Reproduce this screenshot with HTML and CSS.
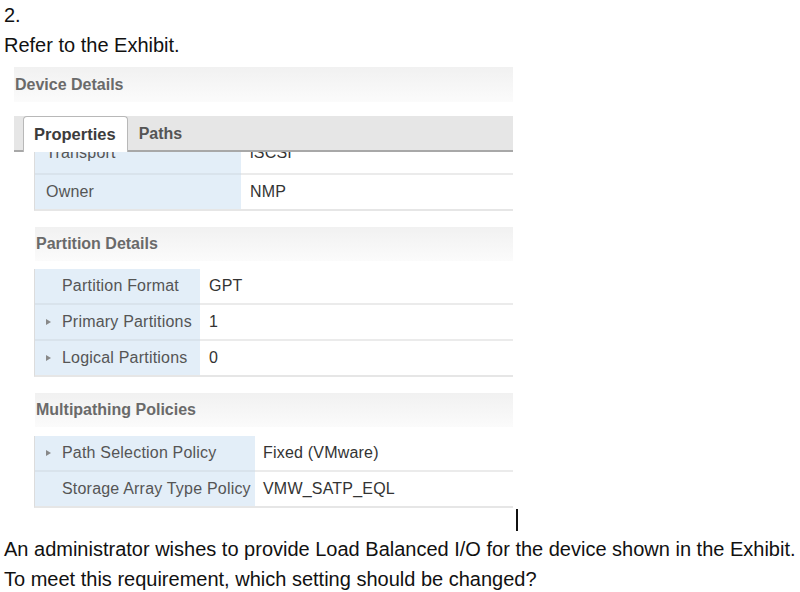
FILE: index.html
```html
<!DOCTYPE html>
<html>
<head>
<meta charset="utf-8">
<link rel="stylesheet" href="styles.css">
</head>
<body>
<p class="line">2.</p>
<p class="line">Refer to the Exhibit.</p>
<div class="exhibit">
  <div class="band band-top"><span>Device Details</span></div>
  <div class="tabbar">
    <div class="tab active">Properties</div>
    <div class="tab">Paths</div>
  </div>
  <div class="clip">
    <div class="grid g1 scrolled">
      <div class="lab first">Transport</div><div class="val first">iSCSI</div>
      <div class="lab last">Owner</div><div class="val last">NMP</div>
    </div>
  </div>
  <div class="band band-sec"><span>Partition Details</span></div>
  <div class="grid g2">
    <div class="lab ind">Partition Format</div><div class="val">GPT</div>
    <div class="lab"><i class="arr"></i>Primary Partitions</div><div class="val">1</div>
    <div class="lab last"><i class="arr"></i>Logical Partitions</div><div class="val last">0</div>
  </div>
  <div class="band band-sec band-mp"><span>Multipathing Policies</span></div>
  <div class="grid g3">
    <div class="lab"><i class="arr"></i>Path Selection Policy</div><div class="val">Fixed (VMware)</div>
    <div class="lab ind last">Storage Array Type Policy</div><div class="val last">VMW_SATP_EQL</div>
  </div>
</div>
<div class="cursor"></div>
<p class="line q">An administrator wishes to provide Load Balanced I/O for the device shown in the Exhibit.</p>
<p class="line q">To meet this requirement, which setting should be changed?</p>
</body>
</html>
```
FILE: styles.css
```css
html, body {
  margin: 0;
  padding: 0;
  background: #fff;
}
body {
  font-family: "Liberation Sans", Arial, sans-serif;
  font-size: 20px;
  color: #111;
  width: 800px;
  height: 592px;
  overflow: hidden;
}
.line {
  margin: 0;
  padding-left: 4px;
  line-height: 30px;
  white-space: nowrap;
}
.exhibit {
  margin: 7px 0 0 14px;
  width: 499px;
  font-size: 16px;
  color: #4a4a4a;
}
.band {
  height: 35px;
  display: flex;
  align-items: center;
  font-weight: bold;
  color: #6a6a6a;
  background: linear-gradient(#f1f1f1, #fbfbfb);
}
.band-top span { padding-left: 1px; }
.band-sec {
  margin-left: 21px;
  height: 34px;
}
.band-sec span { padding-left: 1px; }
.tabbar {
  margin-top: 14px;
  height: 34px;
  background: #e6e6e6;
  border-bottom: 2px solid #a8a8a8;
  display: flex;
  align-items: flex-end;
  padding-left: 9px;
}
.tab {
  font-weight: bold;
  color: #555;
  height: 34px;
  line-height: 36px;
  padding: 0 11px;
}
.tab.active {
  height: 33px;
  line-height: 35px;
  margin-bottom: -2px;
  padding: 0 11px 2px 10px;
  background: #fff;
  border: 1px solid #b8b8b8;
  border-bottom: none;
  border-radius: 4px 4px 0 0;
  color: #3c3c3c;
  font-size: 16.5px;
}
.clip {
  height: 61px;
  overflow: hidden;
  margin-left: 20px;
  margin-bottom: 14px;
}
.grid {
  display: grid;
  margin-left: 20px;
  border-left: 1px solid #dcdcdc;
  border-bottom: 2px solid #e6e6e6;
  letter-spacing: 0.2px;
}
.clip .grid { margin-left: 0; }
.scrolled { margin-top: -13px; }
.g1 { grid-template-columns: 206px 1fr; }
.g2 { grid-template-columns: 165px 1fr; margin-top: 8px; }
.g3 { grid-template-columns: 220px 1fr; margin-top: 9px; }
.lab, .val {
  height: 34px;
  display: flex;
  align-items: center;
  border-bottom: 2px solid #ebebeb;
  white-space: nowrap;
}
.lab.first, .val.first {
  height: 28px;
  padding-bottom: 6px;
}
.lab.last, .val.last { height: 34px; border-bottom: none; }
.lab {
  background: #e3eef8;
  padding-left: 11px;
  color: #555;
  border-bottom-color: #d9e3ec;
}
.lab.ind { padding-left: 27px; }
.val {
  padding-left: 9px;
  color: #333;
}
.g3 .val { padding-left: 8px; }
.arr {
  display: inline-block;
  width: 0;
  height: 0;
  border-top: 3.5px solid transparent;
  border-bottom: 3.5px solid transparent;
  border-left: 5px solid #888;
  margin-right: 11px;
}
.band-mp { margin-top: 16px; }
.cursor {
  margin: 1px 0 0 516px;
  width: 1.5px;
  height: 22px;
  background: #111;
}
.cursor + .q { margin-top: 3px; }
```
